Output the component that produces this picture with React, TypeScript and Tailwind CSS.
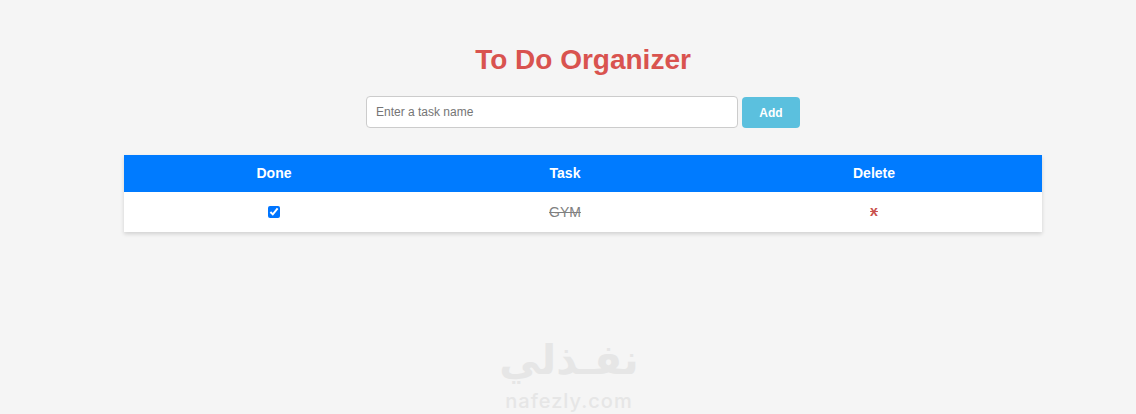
export default function App() {
    return (
        <div className="relative h-[414px] w-[1136px] overflow-hidden bg-[#f5f5f5] pl-[30px] font-['Liberation_Sans',Arial,sans-serif]">
            <h1 className="pt-[44px] text-center text-[28px] leading-[32px] font-bold text-[#d9534f]">To Do Organizer</h1>

            <div className="mt-[20px] flex justify-center gap-1">
                <input
                    type="text"
                    placeholder="Enter a task name"
                    className="h-8 w-[372px] rounded border border-[#ccc] bg-white px-[9px] text-xs text-[#333] outline-none placeholder:text-[#757575]"
                />
                <button className="mt-px h-[31px] w-[58px] rounded bg-[#5bc0de] text-xs font-bold text-white">Add</button>
            </div>

            <table className="mx-auto mt-[27px] w-[918px] table-fixed border-collapse bg-white shadow-[0_2px_4px_rgba(0,0,0,0.15)]">
                <thead>
                    <tr className="h-[37px] bg-[#007bff] text-sm font-bold text-white">
                        <th className="w-[300px] pb-0.5">Done</th>
                        <th className="w-[282px] pb-0.5">Task</th>
                        <th className="pb-0.5">Delete</th>
                    </tr>
                </thead>
                <tbody>
                    <tr className="h-10 text-center text-sm">
                        <td className="pb-0.5">
                            <input type="checkbox" defaultChecked className="size-3 align-middle accent-[#0075ff]" />
                        </td>
                        <td className="text-[#808080] line-through">GYM</td>
                        <td className="pb-0.5 text-sm font-bold text-[#c9514e] line-through">x</td>
                    </tr>
                </tbody>
            </table>

            <div className="pointer-events-none absolute top-[331px] left-[489px] flex w-[160px] flex-col items-center text-[#e6e6e6]">
                <div dir="rtl" className="font-['DejaVu_Sans',sans-serif] text-[41px] leading-[58px] font-bold">نفـذلي</div>
                <div className="font-['Inter',sans-serif] text-[20px] leading-[24px] font-medium tracking-[1px]">nafezly.com</div>
            </div>
        </div>
    );
}
